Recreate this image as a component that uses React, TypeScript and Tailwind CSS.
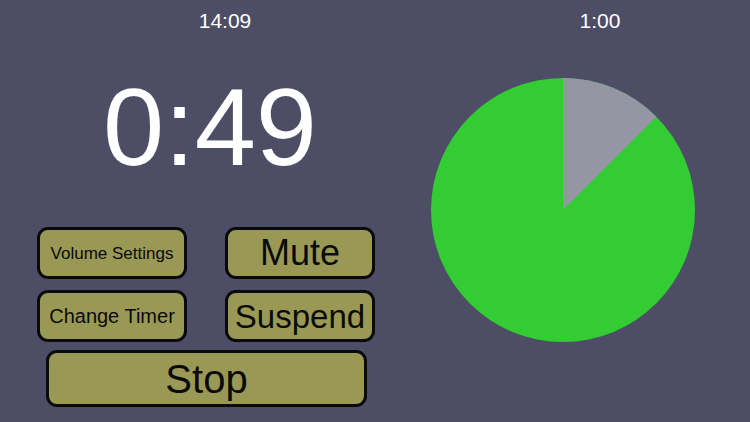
const font = { fontFamily: '"Liberation Sans", Arial, sans-serif' };

function TimerButton({
  label,
  size,
  className = "",
}: {
  label: string;
  size: string;
  className?: string;
}) {
  return (
    <button
      className={`flex items-center justify-center rounded-[11px] border-[3px] border-[#0a0a0a] bg-[#999955] text-[#0a0a0a] leading-none ${size} ${className}`}
    >
      {label}
    </button>
  );
}

function Pie({ fraction }: { fraction: number }) {
  const r = 132;
  const c = 132;
  const a = fraction * Math.PI * 2;
  const x = c + r * Math.sin(a);
  const y = c - r * Math.cos(a);
  return (
    <svg width="264" height="264" viewBox="0 0 264 264">
      <circle cx={c} cy={c} r={r} fill="#33cc33" />
      <path d={`M${c} ${c} L${c} 0 A${r} ${r} 0 0 1 ${x} ${y} Z`} fill="#9595a4" />
    </svg>
  );
}

export default function App() {
  return (
    <div className="w-[750px] h-[422px] overflow-hidden bg-[#4d4d66] text-white" style={font}>
      <div className="flex pt-[10px] text-[21px] leading-[21px]">
        <div className="w-[450px] text-center">14:09</div>
        <div className="w-[300px] text-center">1:00</div>
      </div>
      <div className="flex">
        <div className="w-[400px] pl-[37px]">
          <div className="w-[346px] mt-[41px] text-center text-[110px] leading-[110px]">0:49</div>
          <div className="mt-[45px] grid grid-cols-[150px_150px] gap-x-[38px] gap-y-[11px]">
            <TimerButton label="Volume Settings" size="h-[52px] text-[17px]" />
            <TimerButton label="Mute" size="h-[52px] text-[36px]" />
            <TimerButton label="Change Timer" size="h-[52px] text-[20px]" />
            <TimerButton label="Suspend" size="h-[52px] text-[33px]" />
          </div>
          <TimerButton label="Stop" size="mt-[8px] ml-[9px] w-[321px] h-[57px] text-[40px]" />
        </div>
        <div className="ml-[31px] mt-[47px]">
          <Pie fraction={0.125} />
        </div>
      </div>
    </div>
  );
}
